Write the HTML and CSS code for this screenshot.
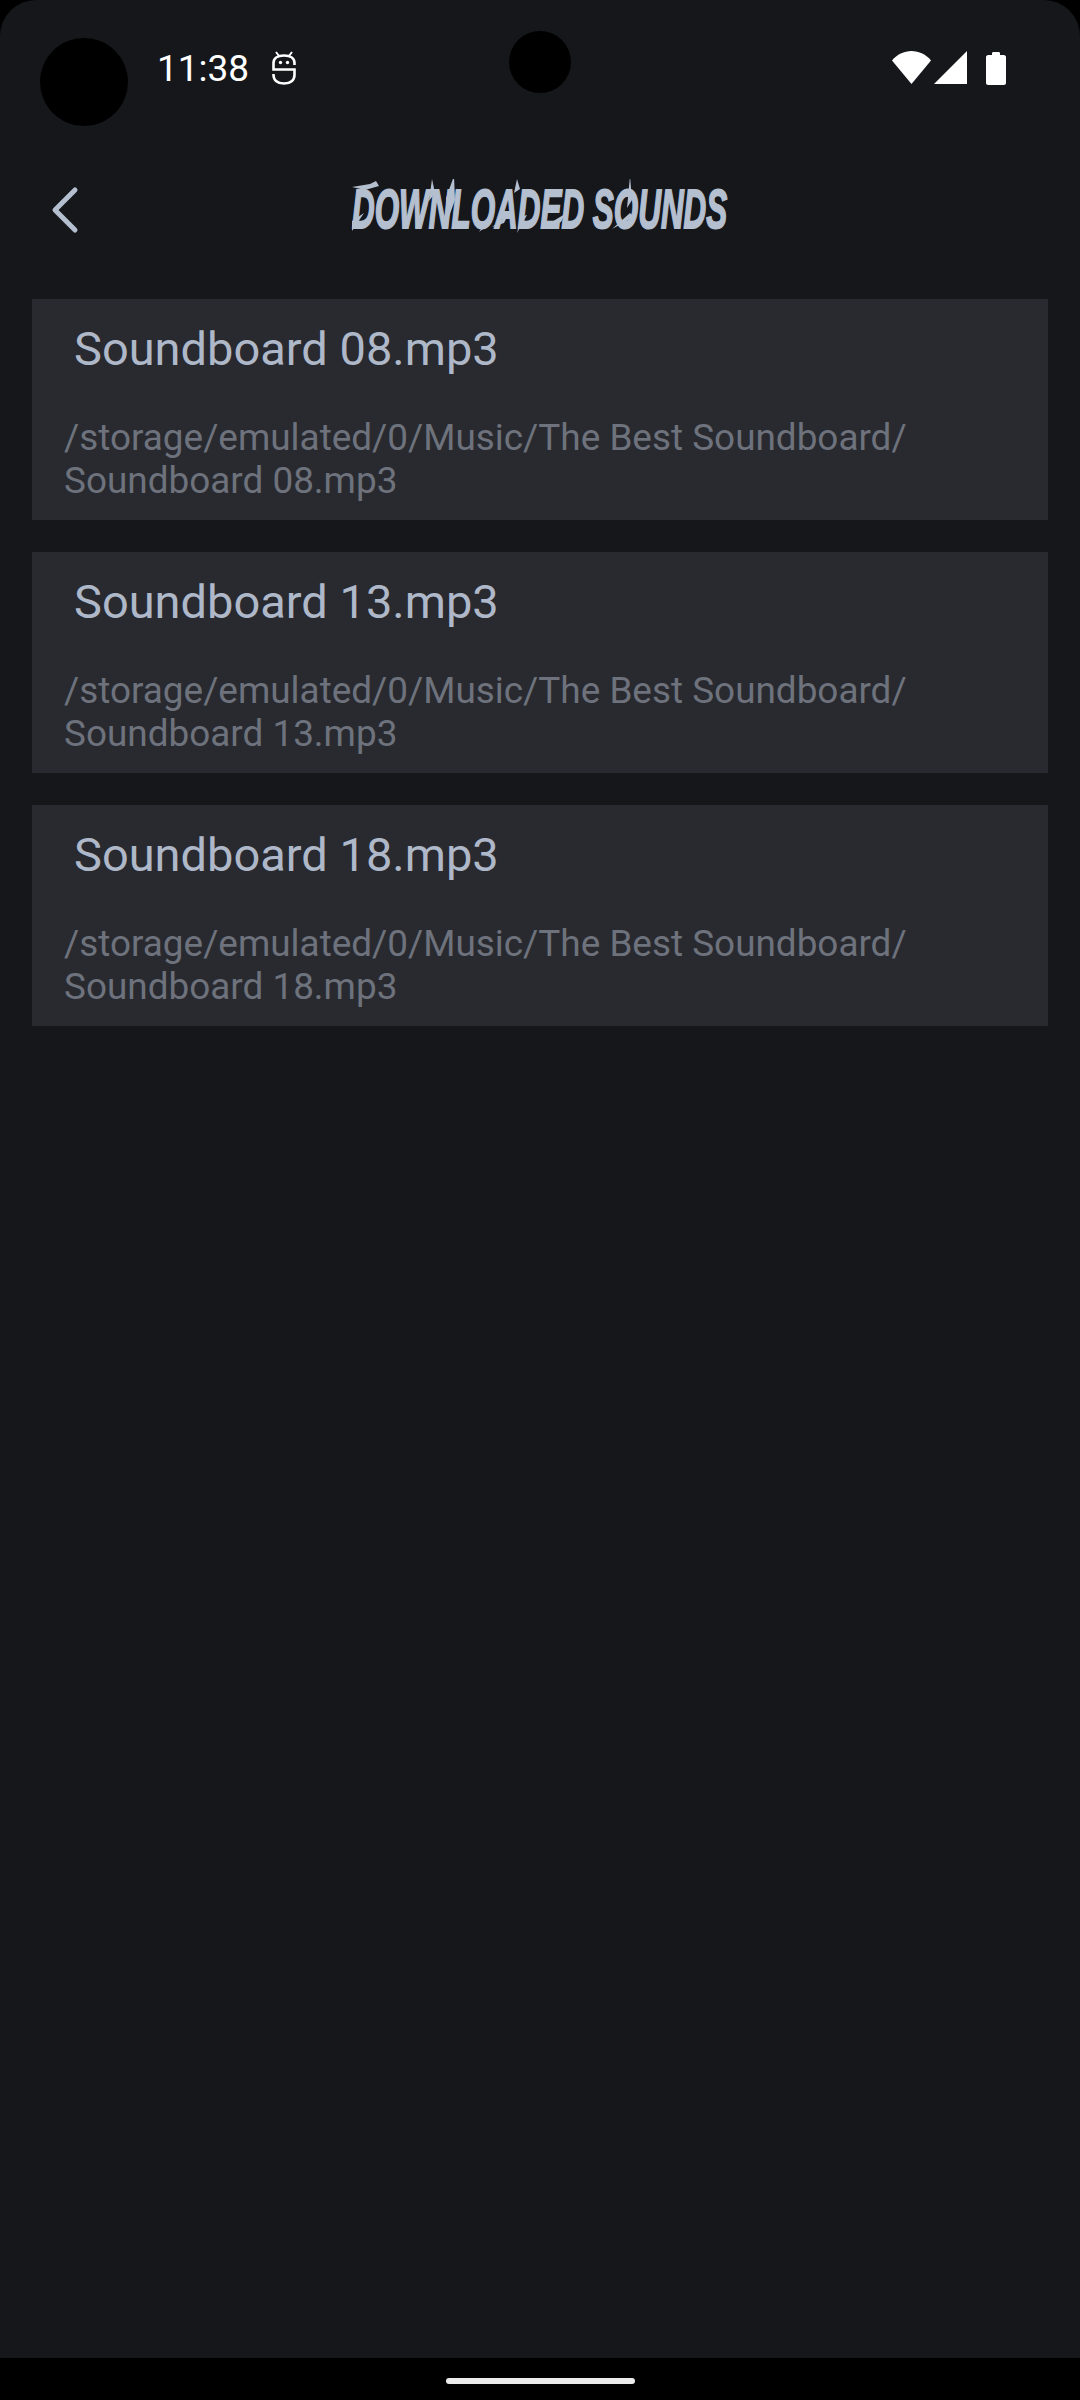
FILE: index.html
```html
<!DOCTYPE html>
<html lang="en">
<head>
  <meta charset="UTF-8">
  <meta name="viewport" content="width=device-width, initial-scale=1.0">
  <title>Downloaded Sounds</title>
  <link rel="stylesheet" href="styles.css">
</head>
<body>
  <div class="screen">
    <div class="hole hole-left"></div>
    <div class="hole hole-center"></div>

    <div class="status-bar">
      <span class="clock">11:38</span>
      <svg class="status-app" viewBox="0 0 24 34" width="24" height="34">
        <path d="M4 1l3 4M20 1l-3 4" stroke="#fff" stroke-width="2" fill="none"/>
        <path d="M22.500 14v-2c0-4.500-4-7.500-10.500-7.500S1.500 7.500 1.500 12v6.500h21V24c0 5-4 8.500-10.500 8.500S1.500 29 1.500 24v-1" stroke="#fff" stroke-width="2.600" fill="none"/>
        <circle cx="8.500" cy="11.500" r="1.700" fill="#fff"/>
        <circle cx="15.500" cy="11.500" r="1.700" fill="#fff"/>
      </svg>
      <div class="status-right">
        <svg viewBox="0 0 39 33" width="39" height="33"><path d="M0 9.500C5 3.500 12 0 19.500 0S34 3.500 39 9.500L19.500 33z" fill="#fff"/></svg>
        <svg viewBox="0 0 33 33" width="33" height="33"><path d="M33 0v33H0z" fill="#fff"/></svg>
        <svg class="battery" viewBox="0 0 20 34" width="20" height="34"><path d="M6 2.500C6 1.500 6.500 1 7.500 1h5c1 0 1.500.5 1.500 1.500V4h4c1 0 2 1 2 2v26c0 1-1 2-2 2H2c-1 0-2-1-2-2V6c0-1 1-2 2-2h4z" fill="#fff"/></svg>
      </div>
    </div>

    <header class="top-bar">
      <svg class="back-icon" viewBox="0 0 30 48" width="30" height="48">
        <path d="M25 4L5 24l20 20" stroke="#b4bfcf" stroke-width="5" stroke-linecap="round" stroke-linejoin="round" fill="none"/>
      </svg>
      <div class="title-wrap">
        <h1 class="title">DOWNLOADED SOUNDS</h1>
        <svg class="title-spikes" viewBox="0 0 376 60" width="376" height="60">
          <path d="M0 8L18 5l6-3 3 5-14 4zM0 42l12-8-12 18zM80 0l3 14-6 8zM102-3l1 24-8 22-1-24zM165 0l3 10-6 4zM165 54l4-16 6-2zM140 48l16-12-4 8zM127 53l10-14 3 4zM193 47l20-12-4 8zM278-3l2 24-5 8zM260 50l18-16 4 4z" fill="#b4bfcf"/>
        </svg>
      </div>
    </header>

    <main class="sound-list">
      <article class="sound-card">
        <h2 class="sound-name">Soundboard 08.mp3</h2>
        <p class="sound-path">/storage/emulated/0/Music/The Best Soundboard/<br>Soundboard 08.mp3</p>
      </article>
      <article class="sound-card">
        <h2 class="sound-name">Soundboard 13.mp3</h2>
        <p class="sound-path">/storage/emulated/0/Music/The Best Soundboard/<br>Soundboard 13.mp3</p>
      </article>
      <article class="sound-card">
        <h2 class="sound-name">Soundboard 18.mp3</h2>
        <p class="sound-path">/storage/emulated/0/Music/The Best Soundboard/<br>Soundboard 18.mp3</p>
      </article>
    </main>

    <div class="nav-bar"><span class="home-pill"></span></div>
  </div>
</body>
</html>
```

FILE: styles.css
```css
html, body {
  margin: 0;
  padding: 0;
  background-color: #000;
}
.screen {
  position: relative;
  width: 1080px;
  height: 2400px;
  display: flex;
  flex-direction: column;
  overflow: hidden;
  background-color: #15171b;
  border-radius: 36px 36px 0 0;
  font-family: Roboto, "Liberation Sans", sans-serif;
}
.hole {
  position: absolute;
  background-color: #000;
  border-radius: 50%;
}
.hole-left {
  left: 40px;
  top: 38px;
  width: 88px;
  height: 88px;
}
.hole-center {
  left: 509px;
  top: 31px;
  width: 62px;
  height: 62px;
}
.status-bar {
  height: 136px;
  box-sizing: border-box;
  display: flex;
  align-items: flex-start;
  padding: 51px 74px 0 157px;
  color: #fff;
}
.clock {
  font-size: 37px;
  line-height: 36px;
}
.status-app {
  margin-left: 23px;
}
.status-right {
  margin-left: auto;
  display: flex;
  gap: 3px;
}
.battery {
  margin-left: 16px;
}
.top-bar {
  height: 163px;
  flex-shrink: 0;
  box-sizing: border-box;
  display: flex;
  align-items: flex-start;
  padding: 50px 0 0 50px;
  position: relative;
}
.back-icon {
  display: block;
}
.title-wrap {
  position: absolute;
  left: 352px;
  top: 43px;
  width: 376px;
  height: 60px;
}
.title {
  margin: 0;
  width: 670px;
  font-family: "Liberation Sans", Arial, sans-serif;
  font-size: 56px;
  line-height: 60px;
  font-weight: 700;
  font-style: italic;
  color: #b4bfcf;
  -webkit-text-stroke: 2px #b4bfcf;
  white-space: nowrap;
  transform-origin: 0 0;
  transform: scaleX(0.561);
}
.title-spikes {
  position: absolute;
  left: 0;
  top: 0;
}
.sound-list {
  flex: 1;
  padding: 0 32px;
  display: flex;
  flex-direction: column;
  gap: 32px;
}
.sound-card {
  height: 221px;
  box-sizing: border-box;
  background-color: #282a30;
  padding: 24px 0 0 32px;
}
.sound-name {
  margin: 0 0 0 10px;
  font-size: 47px;
  line-height: 52px;
  font-weight: 400;
  color: #aeb8c8;
}
.sound-path {
  margin: 41px 0 0;
  font-size: 36.9px;
  line-height: 43px;
  color: #6e727c;
}
.nav-bar {
  height: 42px;
  box-sizing: border-box;
  background-color: #000;
  display: flex;
  justify-content: center;
  padding-top: 20px;
}
.home-pill {
  width: 189px;
  height: 6px;
  border-radius: 3px;
  background-color: #ececec;
}
```
